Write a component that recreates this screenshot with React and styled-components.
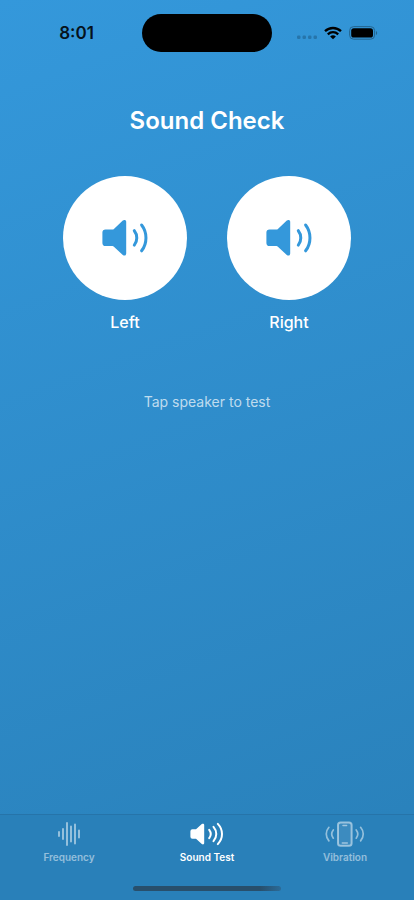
import React, { useState } from "react";
import styled, { createGlobalStyle } from "styled-components";

const GlobalStyle = createGlobalStyle`
  * { box-sizing: border-box; }
  body {
    margin: 0;
    font-family: Inter, "Liberation Sans", sans-serif;
    color: #fff;
  }
  button { font: inherit; color: inherit; background: none; border: 0; padding: 0; cursor: pointer; }
  svg { display: block; }
`;

const Screen = styled.div`
  display: flex;
  flex-direction: column;
  min-height: 100vh;
  background: linear-gradient(160deg, #3498db, #2980b9);
`;

const StatusBar = styled.header`
  display: grid;
  grid-template-columns: 1fr 130px 1fr;
  align-items: center;
  padding-top: 14px;
  color: #06121c;
`;

const Clock = styled.time`
  padding-left: 11px;
  text-align: center;
  font-size: 17px;
  line-height: 24px;
  font-weight: 600;
`;

const Island = styled.div`
  height: 38px;
  border-radius: 19px;
  background: #000;
`;

const StatusIcons = styled.div`
  display: flex;
  align-items: center;
  justify-content: center;
  gap: 7px;
  padding-right: 12px;
`;

const Main = styled.main`
  flex: 1;
  display: flex;
  flex-direction: column;
  align-items: center;
  padding-top: 53px;
`;

const Title = styled.h1`
  margin: 0;
  font-size: 24px;
  line-height: 32px;
  font-weight: 600;
`;

const Speakers = styled.div`
  display: flex;
  gap: 40px;
  margin-top: 39px;
`;

const SpeakerButton = styled.button`
  display: flex;
  flex-direction: column;
  align-items: center;
  gap: 10px;
  font-size: 16px;
  line-height: 24px;
  font-weight: 500;
`;

const Disc = styled.span`
  display: flex;
  align-items: center;
  justify-content: center;
  width: 124px;
  height: 124px;
  border-radius: 50%;
  background: #fff;
  color: #3498db;
`;

const Hint = styled.p`
  margin: 56px 0 0;
  font-size: 14px;
  line-height: 24px;
  color: rgba(255, 255, 255, 0.7);
`;

const TabBar = styled.nav`
  display: grid;
  grid-template-columns: repeat(3, 1fr);
  padding-top: 5px;
  border-top: 1px solid #2674a9;
  background: #2980b9;
`;

const Tab = styled.button`
  display: flex;
  flex-direction: column;
  align-items: center;
  gap: 1px;
  font-size: 10px;
  line-height: 16px;
  font-weight: 600;
  color: ${(p) => (p.$active ? "#fff" : "rgba(255, 255, 255, 0.5)")};
`;

const HomeArea = styled.footer`
  display: flex;
  justify-content: center;
  padding: 21px 0 9px;
  background: #2980b9;
`;

const HomeIndicator = styled.div`
  width: 148px;
  height: 5px;
  border-radius: 3px;
  background: linear-gradient(90deg, #284f6c 86%, #2b6b98);
`;

const Signal = () => (
  <svg width="20" height="14" viewBox="0 0 20 14" fill="#2675ab" aria-hidden="true">
    <rect x="0" y="9.500" width="3.500" height="3.500" rx="1.200" />
    <rect x="5.500" y="9.500" width="3.500" height="3.500" rx="1.200" />
    <rect x="11" y="9.500" width="3.500" height="3.500" rx="1.200" />
    <rect x="16.500" y="9.500" width="3.500" height="3.500" rx="1.200" />
  </svg>
);

const Wifi = () => (
  <svg width="18" height="14" viewBox="0 0 18 14" fill="none" stroke="#000" strokeWidth="2.300" aria-hidden="true">
    <path d="M1 5.200C5.500.9 12.500.9 17 5.200" />
    <path d="M3.800 8.300C6.800 5.500 11.200 5.500 14.200 8.300" />
    <path d="M9 13.300 6.100 10.400Q9 8 11.900 10.400Z" fill="#000" stroke="none" />
  </svg>
);

const Battery = () => (
  <svg width="29" height="14" viewBox="0 0 29 14" aria-hidden="true">
    <rect x=".6" y=".6" width="25" height="12.600" rx="4" fill="none" stroke="#246590" />
    <rect x="2.200" y="2.200" width="21.800" height="9.400" rx="2.600" fill="#000" />
    <path d="M27 5c1.600.6 1.600 3.400 0 4z" fill="#246590" />
  </svg>
);

const SpeakerIcon = () => (
  <svg width="46" height="38" viewBox="0 0 46 38" fill="none" stroke="currentColor" strokeWidth="3" strokeLinecap="round" aria-hidden="true">
    <path
      d="M3.500 10.500H10.500Q11.300 10.500 11.900 9.900L20.800 1.600C22.200.4 24.200 1 24.200 2.800V34.600C24.200 36.600 22.200 37.200 20.800 35.900L11.900 27.700Q11.300 27.100 10.500 27.100H3.500Q.4 27.100.4 24V13.600Q.4 10.500 3.500 10.500Z"
      fill="currentColor"
      stroke="none"
    />
    <path d="M32.300 11.700C35.600 15.800 35.600 22 32.300 26.100" />
    <path d="M39.600 6C45.400 13.400 45.400 24.400 39.600 31.800" />
  </svg>
);

const FrequencyIcon = () => (
  <svg width="24" height="28" viewBox="0 0 24 28" stroke="currentColor" strokeWidth="2" strokeLinecap="round" aria-hidden="true">
    <path d="M2 12v4M6 9v10M10 3v22M14 6.500v15M18 4.500v19M22 10.500v7" />
  </svg>
);

const SoundIcon = () => (
  <svg width="34" height="28" viewBox="0 0 34 28" fill="none" stroke="currentColor" strokeWidth="2" strokeLinecap="round" aria-hidden="true">
    <path
      d="M2.400 9.300H6L11.800 4.100C12.900 3.200 14.200 3.700 14.200 5V23C14.200 24.400 12.900 24.800 11.800 23.900L6 18.700H2.400Q.4 18.700.4 16.700V11.300Q.4 9.300 2.400 9.300Z"
      fill="currentColor"
      stroke="none"
    />
    <path d="M19.200 9.800C21 12.200 21 15.800 19.200 18.200" />
    <path d="M23.500 6.800C27.200 11 27.200 17 23.500 21.200" />
    <path d="M27.800 3.900C33.400 9.800 33.400 18.200 27.800 24.100" />
  </svg>
);

const VibrationIcon = () => (
  <svg width="40" height="28" viewBox="0 0 40 28" fill="none" stroke="currentColor" strokeWidth="2" strokeLinecap="round" aria-hidden="true">
    <rect x="13" y="2.400" width="13.600" height="23.400" rx="2.600" fill="currentColor" fillOpacity=".18" />
    <path d="M18 5.500h3.600M17.300 23h5" strokeWidth="1.500" />
    <path d="M8.300 10C6.400 12.400 6.400 15.800 8.300 18.200M3.900 7.300C.4 11.300.4 16.900 3.900 20.900M31.200 10c1.900 2.400 1.900 5.800 0 8.200M35.600 7.300c3.500 4 3.500 9.600 0 13.600" strokeWidth="1.700" />
  </svg>
);

const tabs = [
  { label: "Frequency", Icon: FrequencyIcon },
  { label: "Sound Test", Icon: SoundIcon },
  { label: "Vibration", Icon: VibrationIcon },
];

export default function App() {
  const [active, setActive] = useState("Sound Test");
  return (
    <Screen>
      <GlobalStyle />
      <StatusBar>
        <Clock>8:01</Clock>
        <Island />
        <StatusIcons>
          <Signal />
          <Wifi />
          <Battery />
        </StatusIcons>
      </StatusBar>
      <Main>
        <Title>Sound Check</Title>
        <Speakers>
          {["Left", "Right"].map((side) => (
            <SpeakerButton key={side} type="button">
              <Disc>
                <SpeakerIcon />
              </Disc>
              {side}
            </SpeakerButton>
          ))}
        </Speakers>
        <Hint>Tap speaker to test</Hint>
      </Main>
      <TabBar>
        {tabs.map(({ label, Icon }) => (
          <Tab
            key={label}
            type="button"
            $active={label === active}
            aria-current={label === active ? "page" : undefined}
            onClick={() => setActive(label)}
          >
            <Icon />
            {label}
          </Tab>
        ))}
      </TabBar>
      <HomeArea>
        <HomeIndicator />
      </HomeArea>
    </Screen>
  );
}
